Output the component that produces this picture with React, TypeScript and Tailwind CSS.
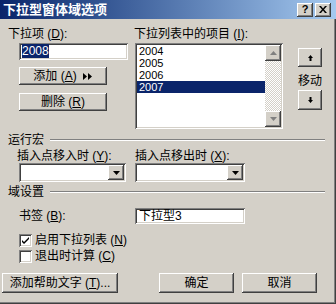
const raised =
  "bg-[#d4d0c8] shadow-[inset_-1px_-1px_#404040,inset_1px_1px_#ffffff,inset_-2px_-2px_#808080,inset_2px_2px_#d4d0c8]";
const sunken =
  "bg-white shadow-[inset_1px_1px_#808080,inset_-1px_-1px_#ffffff,inset_2px_2px_#404040,inset_-2px_-2px_#d4d0c8]";

const U = ({ c }: { c: string }) => <span className="underline underline-offset-1">{c}</span>;

const Tri = ({ down = true, color = "#000" }: { down?: boolean; color?: string }) => (
  <svg width="7" height="4" viewBox="0 0 7 4">
    <path d={down ? "M0 0h7L3.5 4z" : "M0 4h7L3.5 0z"} fill={color} />
  </svg>
);

const Arrow = ({ up }: { up?: boolean }) => (
  <svg width="5" height="6" viewBox="0 0 5 6">
    <path d={up ? "M2.5 0L5 3H3.5V6H1.5V3H0z" : "M2.5 6L5 3H3.5V0H1.5V3H0z"} fill="#000" />
  </svg>
);

const Combo = ({ w }: { w: string }) => (
  <div className={`${sunken} ${w} h-[19px] flex justify-end p-[2px]`}>
    <div className={`${raised} w-[16px] h-full flex items-center justify-center`}>
      <Tri />
    </div>
  </div>
);

const Check = ({ checked, label, k }: { checked?: boolean; label: string; k: string }) => (
  <div className="flex items-center h-[14px] ml-[11px] gap-[3px]">
    <div className={`${sunken} w-[13px] h-[13px] flex items-center justify-center`}>
      {checked && (
        <svg width="7" height="7" viewBox="0 0 7 7">
          <path d="M0 3l2 2 5-5v2L2 7 0 5z" fill="#000" />
        </svg>
      )}
    </div>
    <span>
      {label} (<U c={k} />)
    </span>
  </div>
);

const Group = ({ title }: { title: string }) => (
  <div className="flex items-center h-[14px] pr-[11px]">
    <span>{title}</span>
    <div className="flex-1 ml-[6px] border-t border-b border-t-[#808080] border-b-white" />
  </div>
);

export default function App() {
  return (
    <div
      className="w-[336px] h-[304px] bg-[#d4d0c8] text-[12px] leading-[14px] text-black shadow-[inset_-1px_-1px_#404040,inset_-2px_-2px_#808080] overflow-hidden"
      style={{ fontFamily: '"Liberation Sans", "Noto Sans CJK SC", sans-serif' }}
    >
      <div className="h-[19px] flex items-center pl-[3px] pr-[5px] bg-linear-to-r from-[#0a246a] to-[#a6caf0]">
        <span className="flex-1 text-white font-bold text-[13px]">下拉型窗体域选项</span>
        <div className={`${raised} w-[16px] h-[14px] flex items-center justify-center font-bold text-[11px] leading-none`}>?</div>
        <div className={`${raised} w-[16px] h-[14px] ml-[2px] flex items-center justify-center`}>
          <svg width="8" height="7" viewBox="0 0 8 7">
            <path d="M0 0h2l2 2.5L6 0h2L5 3.5 8 7H6L4 4.5 2 7H0l3-3.5z" fill="#000" />
          </svg>
        </div>
      </div>

      <div className="pl-[8px] pt-[8px]">
        <div className="flex items-start">
          <div className="w-[126px]">
            <div className="h-[14px]">
              下拉项 (<U c="D" />):
            </div>
            <div className={`${sunken} ml-[11px] mt-[2px] w-[109px] h-[17px] pl-[3px] pt-[2px] leading-[13px]`}>
              <span className="bg-[#0a246a] text-white">2008</span>
            </div>
            <div className={`${raised} ml-[11px] mt-[7px] w-[88px] h-[18px] flex items-center justify-center gap-[6px]`}>
              <span>
                添加 (<U c="A" />)
              </span>
              <span className="flex">
                <svg width="10" height="7" viewBox="0 0 10 7">
                  <path d="M0 0l4 3.5L0 7zM5 0l4 3.5L5 7z" fill="#000" />
                </svg>
              </span>
            </div>
            <div className={`${raised} ml-[11px] mt-[8px] w-[88px] h-[18px] flex items-center justify-center`}>
              <span>
                删除 (<U c="R" />)
              </span>
            </div>
          </div>

          <div>
            <div className="h-[14px]">
              下拉列表中的项目 (<U c="I" />):
            </div>
            <div className={`${sunken} ml-[1px] mt-[2px] w-[148px] h-[86px] p-[2px] flex`}>
              <div className="flex-1 text-[11px] leading-[12px]">
                {["2004", "2005", "2006", "2007"].map((y) => (
                  <div key={y} className={`h-[12px] pl-[2px] ${y === "2007" ? "bg-[#0a246a] text-white" : ""}`}>
                    {y}
                  </div>
                ))}
              </div>
              <div className="w-[16px] flex flex-col bg-[repeating-conic-gradient(#d4d0c8_0_25%,#ffffff_0_50%)] bg-[length:2px_2px]">
                <div className={`${raised} h-[16px] flex items-center justify-center`}>
                  <Tri down={false} color="#808080" />
                </div>
                <div className="flex-1" />
                <div className={`${raised} h-[16px] flex items-center justify-center`}>
                  <Tri color="#808080" />
                </div>
              </div>
            </div>
          </div>

          <div className="ml-[15px] flex flex-col items-center w-[24px]">
            <div className={`${raised} mt-[21px] w-[24px] h-[19px] flex items-center justify-center`}>
              <Arrow up />
            </div>
            <div className="mt-[7px] h-[14px] whitespace-nowrap">移动</div>
            <div className={`${raised} mt-[2px] w-[24px] h-[20px] flex items-center justify-center`}>
              <Arrow />
            </div>
          </div>
        </div>

        <div className="mt-[4px]">
          <Group title="运行宏" />
        </div>
        <div className="flex mt-[3px]">
          <div className="w-[127px] pl-[9px]">
            <div className="h-[13px] leading-[13px]">
              插入点移入时 (<U c="Y" />):
            </div>
            <div className="ml-[2px]">
              <Combo w="w-[107px]" />
            </div>
          </div>
          <div>
            <div className="h-[13px] leading-[13px]">
              插入点移出时 (<U c="X" />):
            </div>
            <Combo w="w-[110px]" />
          </div>
        </div>

        <div className="mt-[3px]">
          <Group title="域设置" />
        </div>
        <div className="flex items-center mt-[9px]">
          <div className="w-[127px] pl-[11px]">
            书签 (<U c="B" />):
          </div>
          <div className={`${sunken} w-[110px] h-[16px] pl-[4px] pt-[1px]`}>下拉型3</div>
        </div>

        <div className="mt-[9px]">
          <Check checked label="启用下拉列表" k="N" />
        </div>
        <div className="mt-[2px]">
          <Check label="退出时计算" k="C" />
        </div>

        <div className="flex mt-[10px] -ml-[6px]">
          <div className={`${raised} w-[116px] h-[20px] flex items-center justify-center`}>
            <span>
              添加帮助文字 (<U c="T" />)...
            </span>
          </div>
          <div className={`${raised} ml-[41px] w-[75px] h-[20px] flex items-center justify-center`}>确定</div>
          <div className={`${raised} ml-[8px] w-[75px] h-[20px] flex items-center justify-center`}>取消</div>
        </div>
      </div>
    </div>
  );
}
